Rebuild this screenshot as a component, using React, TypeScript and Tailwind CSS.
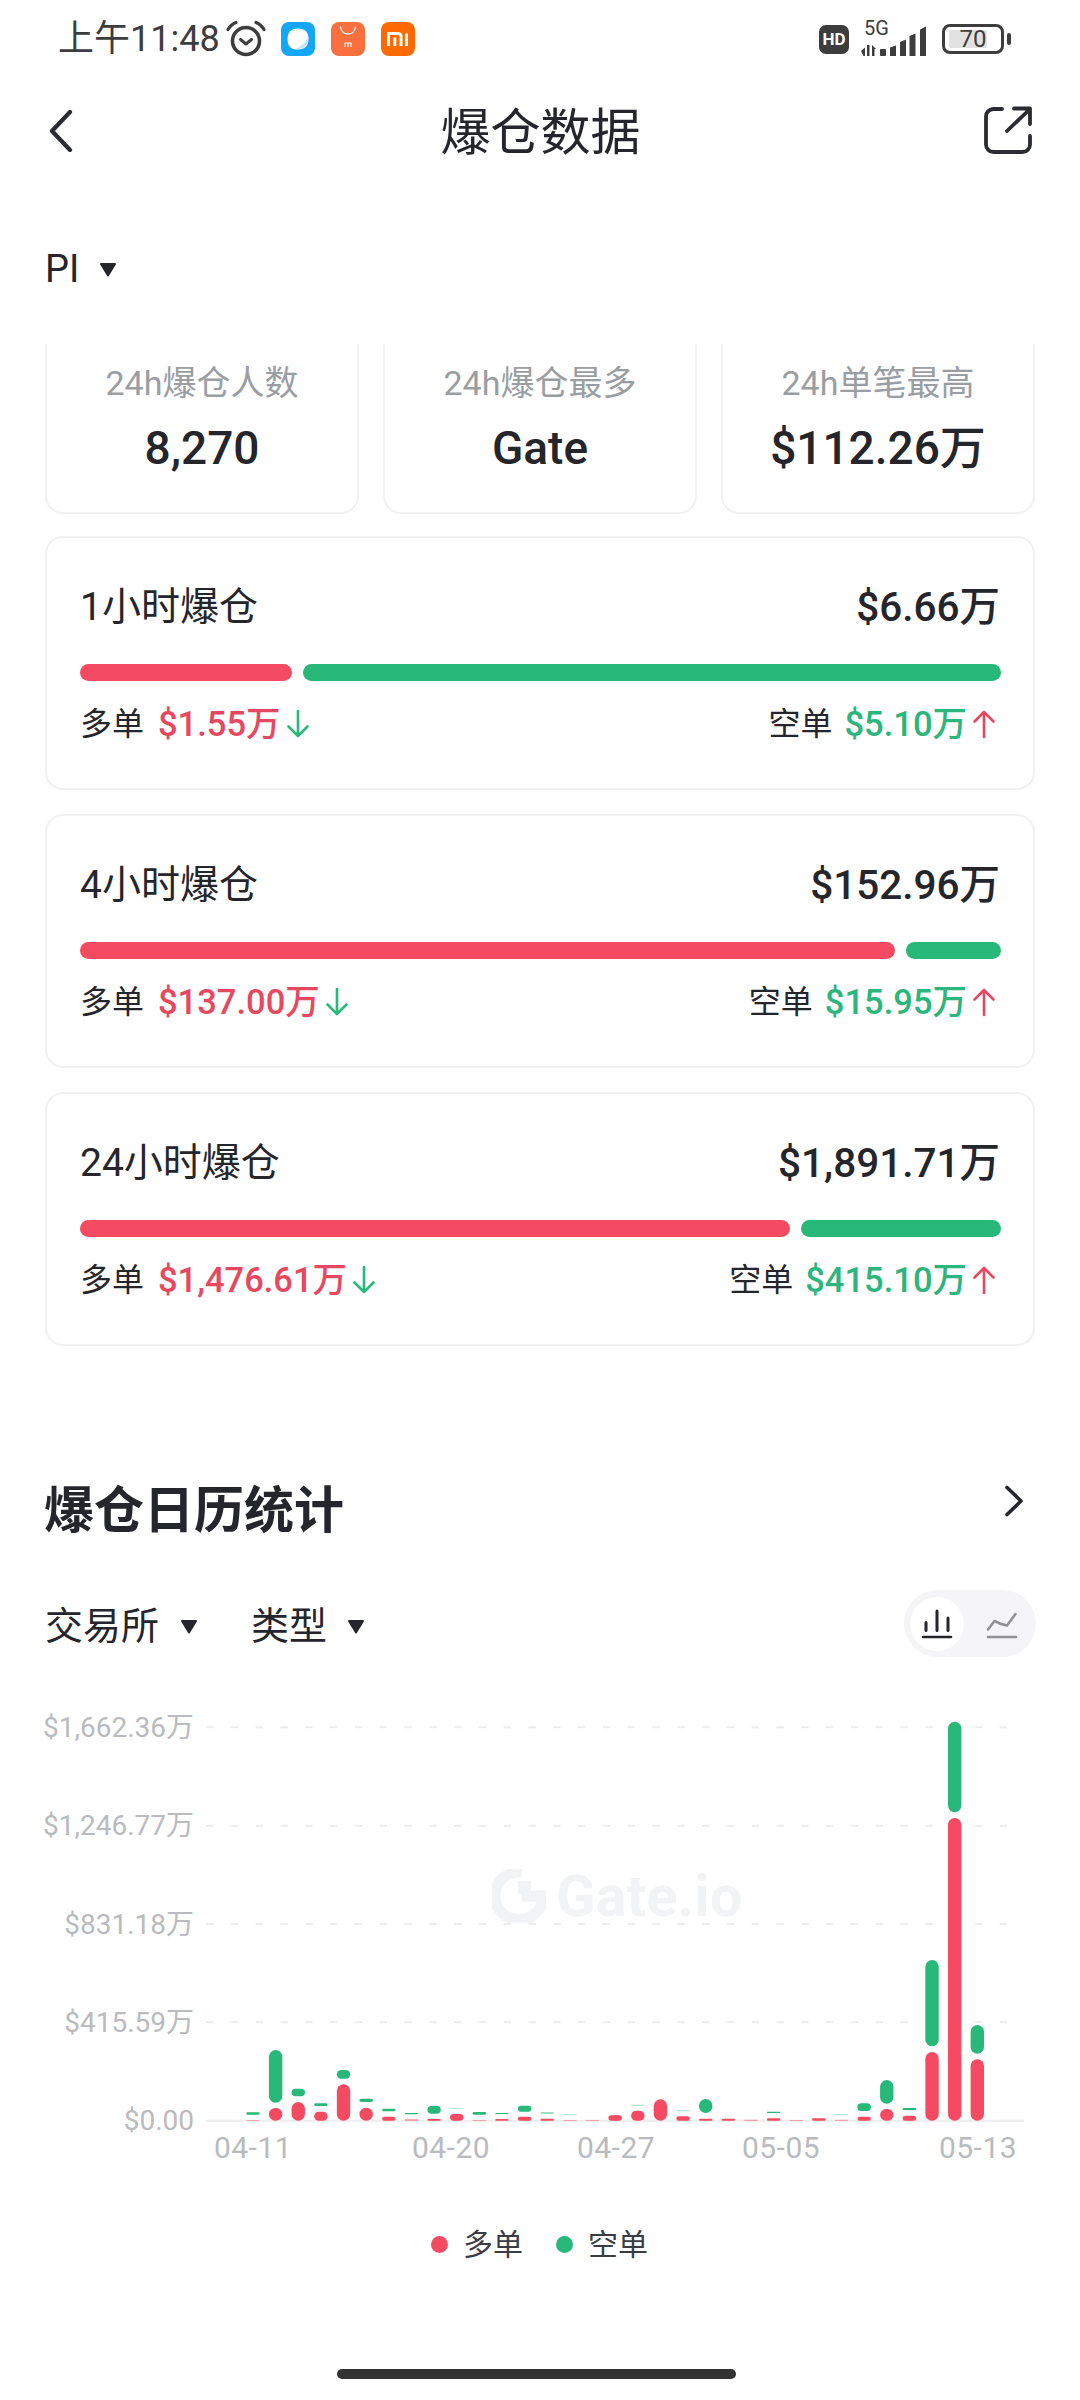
const RED = "#f54b62";
const GREEN = "#27b87a";

// Each row: red top, green top, green bottom, faint green. Values are y offsets measured from the chart crop.
const bars: [number, number | null, number | null, boolean?][] = [
  [483, 460, 467], [447, 273, 431], [429, 389, 412], [458, 433, 441], [376, 333, 359],
  [446, 419, 429], [473, 449, 457], [481, 462, 466], [480, 441, 464], [465, 448, 450, true],
  [483, 459, 467], [480, 462, 465], [473, 440, 458], [479, 459, 465, true], [483, 466, 468, true],
  [483, null, null], [469, null, null], [455, 437, 440, true], [421, null, null], [472, 454, 457, true],
  [479, 420, 462], [479, null, null], [482, null, null], [478, 458, 462], [483, null, null],
  [478, null, null], [482, 465, 467, true], [473, 433, 456], [450, 363, 434], [470, 447, 453],
  [279, 3, 262], [-423, -712, -440], [301, 198, 284],
];

const toY = (z: number) => 281 + z / 3;

function Tri() {
  return (
    <svg width="18" height="15" viewBox="0 0 18 15" className="shrink-0">
      <path d="M2 2h14L9 13.5z" fill="#24262b" stroke="#24262b" strokeWidth="2" strokeLinejoin="round" />
    </svg>
  );
}

function ArrowDown() {
  return (
    <svg width="24" height="30" viewBox="0 0 24 30" fill="none" stroke="#27b87a" strokeWidth="2.6" strokeLinecap="round" strokeLinejoin="round" className="shrink-0">
      <path d="M12 2v25M2.5 17.5 12 27l9.5-9.5" />
    </svg>
  );
}

function ArrowUp() {
  return (
    <svg width="24" height="30" viewBox="0 0 24 30" fill="none" stroke="#e8485f" strokeWidth="2.6" strokeLinecap="round" strokeLinejoin="round" className="shrink-0">
      <path d="M12 28V3M2.5 12.5 12 3l9.5 9.5" />
    </svg>
  );
}

function Alarm() {
  return (
    <svg width="40" height="38" viewBox="0 0 40 38" fill="none" stroke="#3d3d3d" className="shrink-0">
      <circle cx="20" cy="21" r="13.5" strokeWidth="3.6" />
      <path d="M14.5 19.5 20 24l5.5-4.5" strokeWidth="3" strokeLinecap="round" strokeLinejoin="round" />
      <path d="M2 9.5C4 6 6.500 3.800 10 2.500M38 9.500C36 6 33.500 3.800 30 2.500" strokeWidth="3.200" strokeLinecap="round" />
    </svg>
  );
}

function BlueApp() {
  return (
    <svg width="34" height="34" viewBox="0 0 34 34" className="shrink-0">
      <rect width="34" height="34" rx="8" fill="#14a7f7" />
      <path d="M17 6.500c7 0 10.500 4 10.500 10.500S24 27.500 17 27.500c-3 0-6-.6-8-2.500-2-2-2.500-5-2.500-8C6.500 10.500 10 6.500 17 6.500z" fill="#ffffff" />
      <path d="M27.500 15c0 8-5 12.500-13.500 12.300 5-2 10-6.300 13.500-12.300z" fill="#bfe3fb" />
    </svg>
  );
}

function BagApp() {
  return (
    <svg width="34" height="34" viewBox="0 0 34 34" className="shrink-0">
      <rect width="34" height="34" rx="8" fill="#f9703e" />
      <path d="M9.500 5c.8 4.500 3.800 7 7.500 7s6.700-2.500 7.500-7" fill="none" stroke="#ffffff" strokeWidth="1.300" strokeLinecap="round" />
      <path d="M14 25v-4h6v4M17 21v4" fill="none" stroke="#ffffff" strokeWidth="1.100" />
    </svg>
  );
}

function MiApp() {
  return (
    <svg width="34" height="34" viewBox="0 0 34 34" className="shrink-0">
      <rect width="34" height="34" rx="8" fill="#ff6a00" />
      <path d="M7.500 24V11.500h9.500c2 0 3 1 3 3V24M13.800 15.500V24M25.500 11.500V24" fill="none" stroke="#ffffff" strokeWidth="3" />
    </svg>
  );
}

function Signal() {
  return (
    <svg width="66" height="32" viewBox="0 0 66 32" fill="#3d3d3d" className="shrink-0">
      <path d="M0 26l4-3.500V31H2.500zM6 20h2.500v11H6zM11 20l4 4h-1.500v7H11z" />
      <rect x="19" y="24" width="6" height="7" rx="1" />
      <path d="M29 22.500l6-2V31h-6zM39 17l6-2.500V31h-6zM48.500 11l6-2.500V31h-6zM59 4.500l6-3V31h-6z" />
    </svg>
  );
}

function Share() {
  return (
    <svg width="48" height="48" viewBox="0 0 48 48" fill="none" stroke="#2a2c31" strokeWidth="3.800" strokeLinecap="round" strokeLinejoin="round" className="shrink-0">
      <path d="M18 3H9.500A7.500 7.500 0 0 0 2 10.500v28A7.500 7.500 0 0 0 9.500 46h29a7.500 7.500 0 0 0 7.500-7.500V30" />
      <path d="M23 25 46 3M30 2.500h16V18" />
    </svg>
  );
}

function Stat({ label, value }: { label: string; value: string }) {
  return (
    <div className="flex-1 h-full flex flex-col items-center border-2 border-t-0 border-[#f1f1f2] rounded-b-[18px]">
      <div className="mt-[21px] text-[34px] leading-[36px] text-[#9a9ea3]">{label}</div>
      <div className="mt-[22px] text-[46px] leading-[50px] font-medium text-[#24262b]">{value}</div>
    </div>
  );
}

type Liq = {
  title: string;
  total: string;
  redW: string;
  long: string;
  short: string;
};

function LiqCard({ title, total, redW, long, short }: Liq) {
  return (
    <div className="h-[254px] border-2 border-[#f1f1f2] rounded-[18px] pl-[33px] pr-[32px] flex flex-col">
      <div className="mt-[44px] h-[50px] flex items-center justify-between text-[#24262b]">
        <span className="text-[39px]">{title}</span>
        <span className="mr-[1px] text-[40.5px] font-medium">{total}</span>
      </div>
      <div className="mt-[32px] h-[17px] flex gap-[11px]">
        <div className={`${redW} h-full rounded-full bg-[#f54b62]`} />
        <div className="flex-1 h-full rounded-full bg-[#27b87a]" />
      </div>
      <div className="mt-[25px] h-[36px] flex items-center justify-between text-[32px] leading-[36px]">
        <div className="flex items-center">
          <span className="text-[#24262b]">多单</span>
          <span className="ml-[14px] text-[34.5px] font-medium text-[#e8485f]">{long}</span>
          <span className="ml-[5px]"><ArrowDown /></span>
        </div>
        <div className="flex items-center mr-[5px]">
          <span className="text-[#24262b]">空单</span>
          <span className="ml-[12px] text-[34.5px] font-medium text-[#2cb57c]">{short}</span>
          <span className="ml-[5px]"><ArrowUp /></span>
        </div>
      </div>
    </div>
  );
}

const yLabels = ["$1,662.36万", "$1,246.77万", "$831.18万", "$415.59万", "$0.00"];
const xLabels: [string, number][] = [["04-11", 252], ["04-20", 450], ["04-27", 615], ["05-05", 780], ["05-13", 977]];

function Chart() {
  return (
    <div className="relative mt-[21px] flex h-[492px]">
      <div className="w-[194px] shrink-0 flex flex-col items-end text-[28px] text-[#b9bbbe]">
        {yLabels.map((l) => (
          <div key={l} className="h-[98.33px] pt-[2px] flex items-center">{l}</div>
        ))}
      </div>
      <svg width="886" height="492" viewBox="194 0 886 492" className="shrink-0">
        {[0, 1, 2, 3].map((i) => {
          const y = 49.3 + i * 98.33;
          return <line key={i} x1="206" x2="1024" y1={y} y2={y} stroke="#ededee" strokeWidth="2" strokeDasharray="7.500 17.300" />;
        })}
        <line x1="206" x2="1024" y1="442.700" y2="442.700" stroke="#ededee" strokeWidth="2" />
        {bars.map(([redTop, gTop, gBot, faint], i) => {
          const cx = 253 + 22.635 * i;
          const ry = toY(redTop);
          const rh = 442.7 - ry;
          return (
            <g key={i}>
              <rect x={cx - 6.7} y={ry} width="13.400" height={rh} rx={Math.min(6.7, rh / 2)} fill={RED} opacity={rh < 1.5 ? 0.6 : 1} />
              {gTop !== null && gBot !== null && (
                <rect
                  x={cx - 6.7}
                  y={toY(gTop)}
                  width="13.400"
                  height={(gBot - gTop) / 3}
                  rx={Math.min(6.7, (gBot - gTop) / 6)}
                  fill={GREEN}
                  opacity={faint ? 0.45 : 1}
                />
              )}
            </g>
          );
        })}
      </svg>
      {xLabels.map(([l, x]) => (
        <div
          key={l}
          className="absolute top-[453px] -translate-x-1/2 text-[30px] leading-[34px] tracking-[0.5px] text-[#b9bbbe]"
          style={{ left: x + 1 }}
        >
          {l}
        </div>
      ))}
      <div className="absolute left-[492px] top-[191px] flex items-center gap-[10px] text-[#f2f3f4]">
        <svg width="54" height="54" viewBox="0 0 54 54" fill="none">
          <path d="M30 3A24 24 0 1 0 51 27H30" stroke="#f2f3f4" strokeWidth="11" />
          <path d="M26 12h13v13H26z" fill="#f2f3f4" />
        </svg>
        <span className="text-[58px] leading-[54px] font-bold">Gate.io</span>
      </div>
    </div>
  );
}

export default function App() {
  return (
    <div className="w-[1080px] h-[2400px] bg-white overflow-hidden flex flex-col font-[Roboto,'Noto_Sans_CJK_SC',sans-serif]">
      {/* status bar */}
      <div className="h-[78px] flex items-center justify-between pl-[58px] pr-[69px] text-[#3d3d3d]">
        <div className="flex items-center">
          <span className="text-[36px] leading-[40px] whitespace-nowrap">上午11:48</span>
          <span className="ml-[6px]"><Alarm /></span>
          <div className="ml-[15px] flex items-center gap-[16px]">
            <BlueApp />
            <BagApp />
            <MiApp />
          </div>
        </div>
        <div className="flex items-center">
          <div className="w-[30px] h-[29px] rounded-[7px] bg-[#3d3d3d] flex items-center justify-center text-white text-[17px] leading-none font-bold">HD</div>
          <div className="ml-[12px] relative w-[66px] h-[36px]">
            <div className="absolute left-[3px] -top-[3px] text-[20px] leading-[20px]">5G</div>
            <div className="absolute left-0 top-[4px]"><Signal /></div>
          </div>
          <div className="ml-[15px] flex items-center">
            <div className="relative w-[62px] h-[30px] rounded-[8px] border-[3px] border-[#3d3d3d] flex items-center justify-center overflow-hidden">
              <div className="absolute left-[4px] top-[3px] bottom-[3px] w-[38px] rounded-[2px] bg-[#e2e2e2]" />
              <span className="relative text-[24px] leading-none">70</span>
            </div>
            <div className="ml-[3px] w-[4px] h-[12px] rounded-full bg-[#3d3d3d]" />
          </div>
        </div>
      </div>

      {/* header */}
      <div className="h-[104px] pl-[49px] pr-[48px] flex items-center">
        <div className="flex-1 flex pt-[2px]">
          <svg width="24" height="42" viewBox="0 0 24 42" fill="none" stroke="#2a2c31" strokeWidth="4.200" strokeLinecap="round" strokeLinejoin="round">
            <path d="M21 2 3 21l18 19" />
          </svg>
        </div>
        <div className="pt-[5px] text-[50px] leading-[56px] text-[#24262b]">爆仓数据</div>
        <div className="flex-1 flex justify-end">
          <Share />
        </div>
      </div>

      {/* symbol */}
      <div className="mt-[36px] h-[96px] pl-[45px] pr-[46px] pt-[6px] flex items-center gap-[20px] text-[38px] text-[#24262b]">
        <span>PI</span>
        <Tri />
      </div>

      {/* stats */}
      <div className="mt-[30px] h-[170px] mx-[45px] flex gap-[24px]">
        <Stat label="24h爆仓人数" value="8,270" />
        <Stat label="24h爆仓最多" value="Gate" />
        <Stat label="24h单笔最高" value="$112.26万" />
      </div>

      {/* liquidation cards */}
      <div className="mt-[22px] mx-[45px] flex flex-col gap-[24px]">
        <LiqCard title="1小时爆仓" total="$6.66万" redW="w-[212px]" long="$1.55万" short="$5.10万" />
        <LiqCard title="4小时爆仓" total="$152.96万" redW="w-[815px]" long="$137.00万" short="$15.95万" />
        <LiqCard title="24小时爆仓" total="$1,891.71万" redW="w-[710px]" long="$1,476.61万" short="$415.10万" />
      </div>

      {/* calendar */}
      <div className="mt-[135px] h-[60px] pl-[44px] pr-[56px] flex items-center justify-between">
        <div className="text-[50px] leading-[60px] font-bold text-[#24262b]">爆仓日历统计</div>
        <div className="pb-[20px]">
          <svg width="20" height="32" viewBox="0 0 20 32" fill="none" stroke="#24262b" strokeWidth="3.600" strokeLinecap="round" strokeLinejoin="round">
            <path d="M3 2.500 17 16 3 29.500" />
          </svg>
        </div>
      </div>

      <div className="mt-[49px] h-[67px] pl-[45px] pr-[44px] flex items-center justify-between">
        <div className="pt-[6px] flex items-center text-[38px] text-[#24262b]">
          <span>交易所</span>
          <span className="ml-[21px]"><Tri /></span>
          <span className="ml-[53px]">类型</span>
          <span className="ml-[20px]"><Tri /></span>
        </div>
        <div className="w-[132px] h-[67px] rounded-full bg-[#f5f5f7] flex items-center pl-[6px]">
          <div className="w-[54px] h-[54px] rounded-full bg-white flex items-center justify-center">
            <svg width="32" height="30" viewBox="0 0 32 30" fill="none" stroke="#24262b" strokeLinecap="round">
              <path d="M5 13.500v8M16 2v19.500M27 9v12.500" strokeWidth="3" />
              <path d="M2 28h28" strokeWidth="2.600" />
            </svg>
          </div>
          <div className="ml-[22px]">
            <svg width="32" height="30" viewBox="0 0 32 30" fill="none" stroke="#8f9194" strokeLinecap="round" strokeLinejoin="round">
              <path d="M2 20.500 8.500 12l6.500 3 6 1.500L29.500 5" strokeWidth="2.600" />
              <path d="M2 28h28" strokeWidth="2.600" />
            </svg>
          </div>
        </div>
      </div>

      <Chart />

      {/* legend */}
      <div className="mt-[54px] h-[40px] pl-[431px] flex items-center text-[30px] text-[#3b3d45]">
        <div className="w-[17px] h-[17px] rounded-full bg-[#f54b62]" />
        <span className="ml-[15px]">多单</span>
        <div className="ml-[33px] w-[17px] h-[17px] rounded-full bg-[#27b87a]" />
        <span className="ml-[15px]">空单</span>
      </div>

      {/* home indicator */}
      <div className="mt-[105px] ml-[337px] w-[399px] h-[10px] rounded-full bg-[#333333]" />
    </div>
  );
}
